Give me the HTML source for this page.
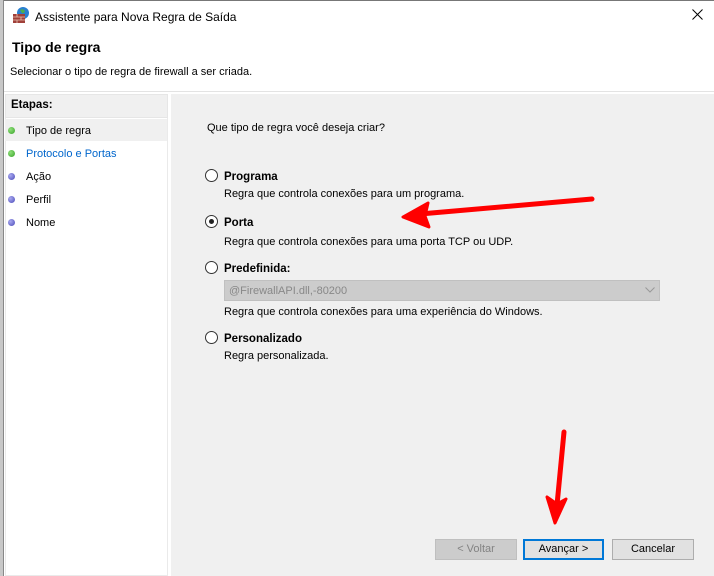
<!DOCTYPE html>
<html><head><meta charset="utf-8"><style>
*{margin:0;padding:0;box-sizing:border-box}
body{width:714px;height:576px;overflow:hidden;background:#fff;font-family:"Liberation Sans",sans-serif;font-size:11px;color:#000;position:relative}
.a{position:absolute}
.b{font-weight:bold;font-size:11.5px}
.radio{position:absolute;width:13px;height:13px;border:1px solid #333;border-radius:50%;background:#fff}
.radio.on::after{content:"";position:absolute;left:3px;top:3px;width:5px;height:5px;border-radius:50%;background:#222}
.dot{position:absolute;left:8px;width:7px;height:7px;border-radius:50%}
.btn{position:absolute;top:539px;height:21px;border:1px solid #adadad;background:#e1e1e1;text-align:center;line-height:19px;font-size:11px}
</style></head><body>
<div class="a" style="left:0;top:0;width:4px;height:576px;background:#c8c8c8"></div>
<div class="a" style="left:3px;top:0;width:1px;height:576px;background:#888"></div>
<div class="a" style="left:4px;top:0;width:710px;height:1px;background:#777"></div>
<svg class="a" style="left:11px;top:6px" width="20" height="18" viewBox="0 0 20 18">
<circle cx="12" cy="7" r="6" fill="#2a7fd0"/><path d="M9 4q3 -2 5 1q-1 3 -3 2z" fill="#4caf50"/>
<rect x="2" y="8" width="12" height="9" fill="#a0403a"/>
<path d="M2 11h12M2 14h12M6 8v3M10 11v3M6 14v3" stroke="#e8c0b0" stroke-width="0.8"/>
</svg>
<div class="a" style="left:35px;top:10px;font-size:12px">Assistente para Nova Regra de Saída</div>
<svg class="a" style="left:692px;top:9px" width="11" height="11"><path d="M0.5 0.5L10.5 10.5M10.5 0.5L0.5 10.5" stroke="#000" stroke-width="1"/></svg>
<div class="a" style="left:12px;top:39px;font-size:14px;font-weight:bold">Tipo de regra</div>
<div class="a" style="left:10px;top:66px">Selecionar o tipo de regra de firewall a ser criada.</div>
<div class="a" style="left:4px;top:91px;width:710px;height:1px;background:#e3e3e3"></div>
<div class="a" style="left:5px;top:94px;width:163px;height:482px;border:1px solid #eaeaea;background:#fff"></div>
<div class="a" style="left:5px;top:94px;width:163px;height:24px;background:#f0f0f0;border:1px solid #e6e6e6"></div>
<div class="a b" style="left:11px;top:99px">Etapas:</div>
<div class="a" style="left:5px;top:119px;width:162px;height:22px;background:#f0f0f0"></div>
<div class="dot" style="top:127px;background:radial-gradient(circle at 35% 35%,#8fe07a,#3aa32a)"></div>
<div class="dot" style="top:150px;background:radial-gradient(circle at 35% 35%,#8fe07a,#3aa32a)"></div>
<div class="dot" style="top:173px;background:radial-gradient(circle at 35% 35%,#a9a9f0,#4a4ab8)"></div>
<div class="dot" style="top:196px;background:radial-gradient(circle at 35% 35%,#a9a9f0,#4a4ab8)"></div>
<div class="dot" style="top:219px;background:radial-gradient(circle at 35% 35%,#a9a9f0,#4a4ab8)"></div>
<div class="a" style="left:26px;top:125px">Tipo de regra</div>
<div class="a" style="left:26px;top:148px;color:#0066cc">Protocolo e Portas</div>
<div class="a" style="left:26px;top:171px">Ação</div>
<div class="a" style="left:26px;top:194px">Perfil</div>
<div class="a" style="left:26px;top:217px">Nome</div>
<div class="a" style="left:171px;top:94px;width:543px;height:482px;background:#f0f0f0"></div>
<div class="a" style="left:207px;top:122px">Que tipo de regra você deseja criar?</div>
<div class="radio" style="left:205px;top:169px"></div>
<div class="a b" style="left:224px;top:171px">Programa</div>
<div class="a" style="left:224px;top:188px">Regra que controla conexões para um programa.</div>
<div class="radio on" style="left:205px;top:215px"></div>
<div class="a b" style="left:224px;top:217px">Porta</div>
<div class="a" style="left:224px;top:236px">Regra que controla conexões para uma porta TCP ou UDP.</div>
<div class="radio" style="left:205px;top:261px"></div>
<div class="a b" style="left:224px;top:263px">Predefinida:</div>
<div class="a" style="left:224px;top:280px;width:436px;height:21px;background:#cccccc;border:1px solid #c0c0c0;color:#888;padding:4px 4px;font-size:11px">@FirewallAPI.dll,-80200</div>
<svg class="a" style="left:645px;top:287px" width="10" height="6"><path d="M0.5 0.5L5 5L9.5 0.5" stroke="#999" fill="none"/></svg>
<div class="a" style="left:224px;top:306px">Regra que controla conexões para uma experiência do Windows.</div>
<div class="radio" style="left:205px;top:331px"></div>
<div class="a b" style="left:224px;top:333px">Personalizado</div>
<div class="a" style="left:224px;top:350px">Regra personalizada.</div>
<div class="btn" style="left:435px;width:82px;background:#cccccc;border-color:#bfbfbf;color:#838383">&lt; Voltar</div>
<div class="btn" style="left:523px;width:81px;border:2px solid #0078d7;line-height:17px">Avançar &gt;</div>
<div class="btn" style="left:612px;width:82px">Cancelar</div>
<svg class="a" style="left:0;top:0" width="714" height="576">
<path d="M592 199L420 214" stroke="#f00" stroke-width="5" stroke-linecap="round"/>
<path d="M428 203L403 217L429 227L425 216Z" fill="#f00" stroke="#f00" stroke-width="3" stroke-linejoin="round"/>
<path d="M564 432L557 505" stroke="#f00" stroke-width="5" stroke-linecap="round"/>
<path d="M547 497L555 523L566 499L557 504Z" fill="#f00" stroke="#f00" stroke-width="3" stroke-linejoin="round"/>
</svg>
</body></html>
